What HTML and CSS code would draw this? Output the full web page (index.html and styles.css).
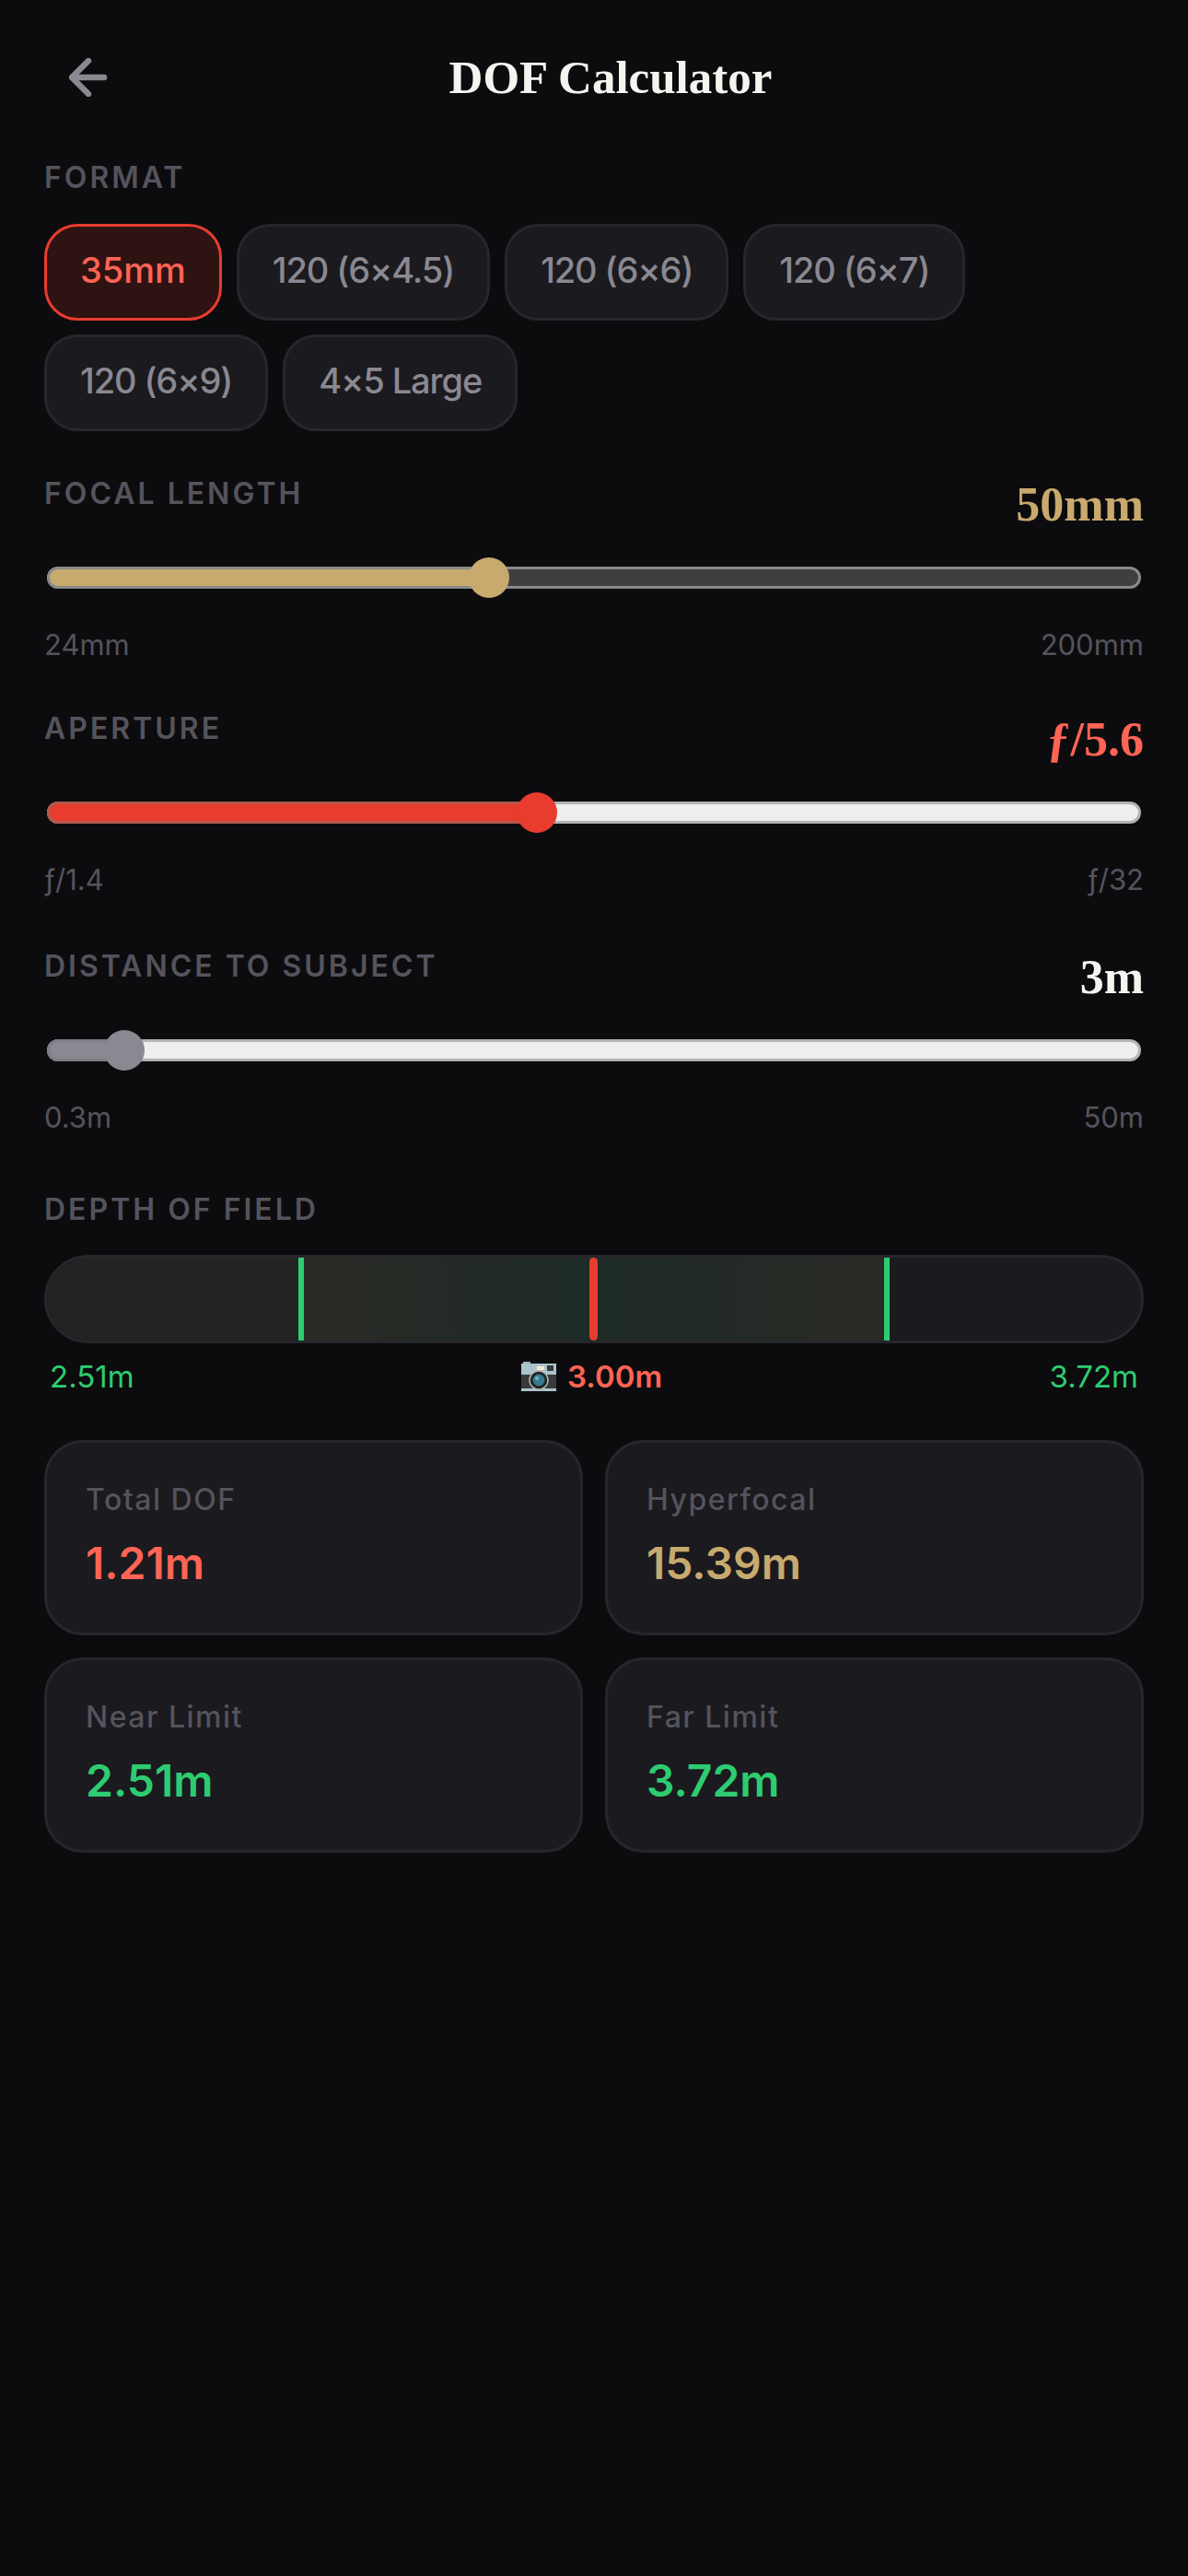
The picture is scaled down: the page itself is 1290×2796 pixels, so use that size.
FILE: index.html
```html
<!DOCTYPE html>
<html lang="en">
<head>
    <meta charset="UTF-8">
    <meta name="viewport" content="width=device-width, initial-scale=1.0">
    <title>DOF Calculator</title>
    <link rel="stylesheet" href="styles.css">
</head>
<body>
    <header class="top-bar">
        <button class="back-button" aria-label="Back">
            <svg width="42" height="42" viewBox="0 0 42 42" fill="none" stroke="currentColor" stroke-width="6.5" stroke-linecap="round" stroke-linejoin="round">
                <path d="M38 21H4"/>
                <path d="M21 3L3 21l18 18"/>
            </svg>
        </button>
        <h1>DOF Calculator</h1>
    </header>

    <section class="format">
        <div class="label">FORMAT</div>
        <div class="format-list">
            <button class="format-item active">35mm</button>
            <button class="format-item">120 (6×4.5)</button>
            <button class="format-item">120 (6×6)</button>
            <button class="format-item">120 (6×7)</button>
            <button class="format-item">120 (6×9)</button>
            <button class="format-item">4×5 Large</button>
        </div>
    </section>

    <section class="slider focal">
        <div class="slider-head">
            <div class="label">FOCAL LENGTH</div>
            <div class="value">50mm</div>
        </div>
        <div class="track">
            <div class="fill" style="width: 40%"></div>
            <div class="thumb" style="left: 455px"></div>
        </div>
        <div class="range"><span>24mm</span><span>200mm</span></div>
    </section>

    <section class="slider aperture">
        <div class="slider-head">
            <div class="label">APERTURE</div>
            <div class="value">ƒ/5.6</div>
        </div>
        <div class="track">
            <div class="fill" style="width: 45%"></div>
            <div class="thumb" style="left: 506.5px"></div>
        </div>
        <div class="range"><span>ƒ/1.4</span><span>ƒ/32</span></div>
    </section>

    <section class="slider distance">
        <div class="slider-head">
            <div class="label">DISTANCE TO SUBJECT</div>
            <div class="value">3m</div>
        </div>
        <div class="track">
            <div class="fill" style="width: 7%"></div>
            <div class="thumb" style="left: 59px"></div>
        </div>
        <div class="range"><span>0.3m</span><span>50m</span></div>
    </section>

    <section class="dof">
        <div class="label">DEPTH OF FIELD</div>
        <div class="dof-bar">
            <div class="dof-near"></div>
            <div class="dof-zone"></div>
            <div class="tick tick-near"></div>
            <div class="tick tick-focus"></div>
            <div class="tick tick-far"></div>
        </div>
        <div class="dof-labels">
            <span class="green">2.51m</span>
            <span class="focus-label">
                <svg width="38" height="32" viewBox="0 0 38 32">
                    <rect x="2" y="0" width="8" height="4" fill="#9fb6c0"/>
                    <rect x="0" y="2" width="38" height="30" rx="1" fill="#3a3a3c"/>
                    <rect x="0" y="2" width="38" height="12" fill="#acc3cd"/>
                    <rect x="17" y="5" width="8" height="4" fill="#f4ecd0"/>
                    <rect x="28" y="4" width="7" height="6" fill="#3a3a3c"/>
                    <rect x="0" y="29" width="38" height="3" fill="#acc3cd"/>
                    <circle cx="19" cy="20" r="10" fill="#222" stroke="#b5b5b5" stroke-width="1.5"/>
                    <circle cx="19" cy="20" r="6.5" fill="#37798f"/>
                    <circle cx="17" cy="18" r="2" fill="#7fb3c4"/>
                </svg>
                3.00m
            </span>
            <span class="green">3.72m</span>
        </div>
    </section>

    <section class="stats">
        <div class="stat">
            <div class="stat-label">Total DOF</div>
            <div class="stat-value coral">1.21m</div>
        </div>
        <div class="stat">
            <div class="stat-label">Hyperfocal</div>
            <div class="stat-value gold">15.39m</div>
        </div>
        <div class="stat">
            <div class="stat-label">Near Limit</div>
            <div class="stat-value green">2.51m</div>
        </div>
        <div class="stat">
            <div class="stat-label">Far Limit</div>
            <div class="stat-value green">3.72m</div>
        </div>
    </section>
</body>
</html>
```

FILE: styles.css
```css
* {
    box-sizing: border-box;
}
body {
    font-family: 'Inter', 'Liberation Sans', sans-serif;
    margin: 0;
    padding: 0 48px;
    min-height: 2796px;
    background-color: #0c0c0e;
    color: #f5f5f0;
}
.top-bar {
    display: flex;
    align-items: center;
    height: 72px;
    margin-top: 48px;
    padding: 0 33px 0 27px;
}
.back-button {
    display: flex;
    padding: 0;
    background: none;
    border: none;
    color: #8a8890;
}
.top-bar h1 {
    flex: 1;
    margin: 0;
    text-align: center;
    font-family: 'Liberation Serif', serif;
    font-size: 51px;
    line-height: 72px;
    font-weight: 700;
}
.label {
    padding-top: 2px;
    margin-bottom: -2px;
    color: #55535c;
    font-size: 32px;
    line-height: 42px;
    font-weight: 600;
    letter-spacing: 3px;
}
.format {
    margin-top: 50px;
}
.format-list {
    display: flex;
    flex-wrap: wrap;
    gap: 15px 16px;
    margin-top: 31px;
}
.format-item {
    height: 105px;
    padding: 0 36px 5px;
    background-color: #1a1a1f;
    border: 3px solid #26262b;
    border-radius: 36px;
    color: #8a8890;
    font-family: inherit;
    font-size: 38px;
    font-weight: 500;
    letter-spacing: -1.1px;
}
.format-item.active {
    background-color: #2f1212;
    border-color: #e83c2f;
    color: #ff6455;
    letter-spacing: 0;
}
.slider {
    margin-top: 45px;
}
.aperture {
    margin-top: 47px;
}
.distance {
    margin-top: 50px;
}
.slider-head {
    display: flex;
    justify-content: space-between;
    height: 102px;
}
.value {
    padding-top: 5px;
    font-family: 'Liberation Serif', serif;
    font-size: 52px;
    line-height: 60px;
    font-weight: 700;
}
.track {
    position: relative;
    height: 24px;
    margin: 0 3px;
    border: 3px solid #8a8a8a;
    border-radius: 12px;
    background-color: #3f3f3f;
}
.fill {
    height: 24px;
    margin: -3px 0 0 -3px;
    border: 3px solid #8a8a8a;
    border-right: none;
    border-radius: 12px 0 0 12px;
}
.thumb {
    position: absolute;
    top: -13.5px;
    width: 44px;
    height: 44px;
    border-radius: 50%;
}
.range {
    display: flex;
    justify-content: space-between;
    margin-top: 40px;
    color: #55535c;
    font-size: 31px;
    line-height: 42px;
}
.focal .value {
    color: #c8a96e;
}
.focal .fill,
.focal .thumb {
    background-color: #c8a96e;
}
.aperture .value {
    color: #ff6455;
}
.aperture .track,
.distance .track {
    border-color: #b3b3b3;
    background-color: #eeeeee;
}
.aperture .fill,
.aperture .thumb {
    background-color: #e83c2f;
}
.aperture .fill {
    border-color: #b5574c;
}
.distance .fill,
.distance .thumb {
    background-color: #8a8890;
}
.distance .fill {
    border-color: #7f7d85;
}
.dof {
    margin-top: 56px;
}
.dof-bar {
    position: relative;
    display: flex;
    height: 96px;
    margin-top: 30px;
    overflow: hidden;
    background-color: #1a1a1f;
    border: 3px solid #26262b;
    border-radius: 48px;
}
.dof-near {
    width: 276px;
    background-color: #232323;
}
.dof-zone {
    width: 636px;
    background: linear-gradient(90deg, #2a2a26, #1e2b26 50%, #2a2a26);
}
.tick {
    position: absolute;
    top: 0;
    bottom: 0;
    width: 6px;
    background-color: #2ecc71;
}
.tick-near {
    left: 273px;
}
.tick-far {
    left: 909px;
}
.tick-focus {
    left: 589px;
    width: 9px;
    border-radius: 5px;
    background-color: #e83c2f;
}
.dof-labels {
    display: flex;
    justify-content: space-between;
    margin-top: 15px;
    padding: 0 6px;
    font-size: 33px;
    line-height: 42px;
}
.focus-label {
    display: flex;
    align-items: center;
    gap: 12px;
    color: #ff6455;
    font-weight: 600;
}
.green {
    color: #2ecc71;
}
.coral {
    color: #ff6455;
}
.gold {
    color: #c8a96e;
}
.stats {
    display: grid;
    grid-template-columns: 1fr 1fr;
    gap: 24px;
    margin-top: 48px;
}
.stat {
    height: 212px;
    padding: 42px;
    background-color: #1a1a1f;
    border: 3px solid #26262b;
    border-radius: 42px;
}
.stat-label {
    color: #55535c;
    font-size: 32px;
    line-height: 40px;
    font-weight: 500;
    letter-spacing: 1.5px;
}
.stat-value {
    margin-top: 16px;
    font-size: 48px;
    line-height: 66px;
    font-weight: 600;
}
```
